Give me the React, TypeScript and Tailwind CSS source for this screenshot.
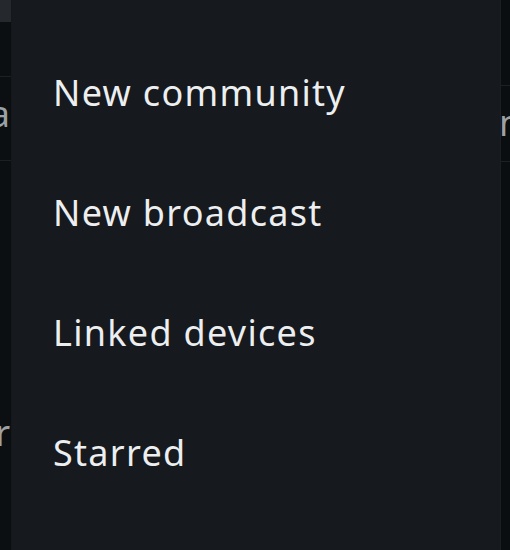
const items = ["New community", "New broadcast", "Linked devices", "Starred"];

const App = () => {
    return (
        <div
            className="w-[510px] h-[550px] flex overflow-hidden bg-[#0c0f12]"
            style={{ fontFamily: '"Noto Sans", "Open Sans", sans-serif' }}
        >
            {/* dimmed screen behind the menu, left edge */}
            <div className="w-[12px] shrink-0 flex flex-col border-r border-[#15181b]">
                <div className="h-[22px] bg-[#25282c]" />
                <div className="h-[54px]" />
                <div className="h-[85px] border-y border-[#1c1f23] relative overflow-hidden">
                    <span className="absolute right-[1px] top-[19px] text-[36px] leading-none text-[#9ea1a4]">a</span>
                </div>
                <div className="flex-1 relative overflow-hidden">
                    <span className="absolute right-[1px] top-[254px] text-[36px] leading-none text-[#9ea1a4]">r</span>
                </div>
            </div>

            {/* overflow menu */}
            <div className="w-[488px] shrink-0 bg-[#16191d] pt-[33px]">
                {items.map((item) => (
                    <div key={item} className="h-[120px] flex items-center pl-[41px]">
                        <span className="text-[36px] leading-none tracking-[1.3px] text-[#eceef0]">{item}</span>
                    </div>
                ))}
            </div>

            {/* dimmed screen behind the menu, right edge */}
            <div className="w-[10px] shrink-0 flex flex-col bg-[#0b0e11] border-l border-[#1b1e22]">
                <div className="h-[85px]" />
                <div className="h-[77px] border-y border-[#1c1f23] relative overflow-hidden">
                    <span className="absolute left-[-2px] top-[19px] text-[36px] leading-none text-[#9ea1a4]">n</span>
                </div>
            </div>
        </div>
    );
};

export default App;
